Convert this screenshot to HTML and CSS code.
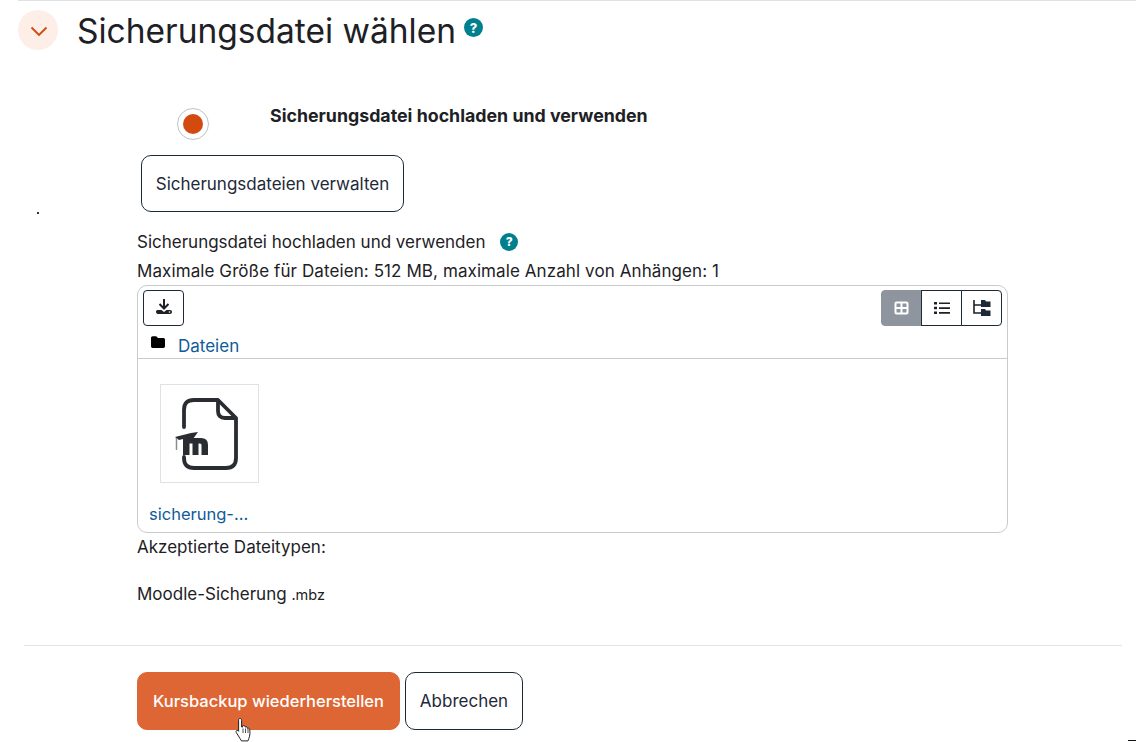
FILE: index.html
```html
<!DOCTYPE html>
<html lang="de">
<head>
<meta charset="utf-8">
<title>Sicherungsdatei wählen</title>
<link rel="stylesheet" href="styles.css">
</head>
<body>
<section class="section">
  <header class="head">
    <button class="toggle" type="button" aria-label="Einklappen">
      <svg width="18" height="11" viewBox="0 0 18 11"><path d="M1.500 1.500 9 9l7.500-7.500" fill="none" stroke="#d24a0e" stroke-width="1.900"/></svg>
    </button>
    <h2 class="title">Sicherungsdatei wählen</h2>
    <span class="help help-lg">?</span>
  </header>

  <div class="radio-row">
    <span class="radio"><span class="radio-dot"></span></span>
    <strong class="radio-label">Sicherungsdatei hochladen und verwenden</strong>
  </div>

  <div class="manage-row"><button class="btn btn-manage" type="button">Sicherungsdateien verwalten</button></div>
  <div class="speck"></div>

  <div class="form">
    <div class="line line-label">Sicherungsdatei hochladen und verwenden <span class="help help-sm">?</span></div>
    <div class="line line-max">Maximale Größe für Dateien: 512 MB, maximale Anzahl von Anhängen: 1</div>

    <div class="picker">
      <div class="toolbar">
        <button class="tool" type="button" aria-label="Herunterladen">
          <svg width="18" height="16" viewBox="0 0 18 16"><path d="M9 0v8" stroke="#1d2125" stroke-width="2" fill="none"/><path d="M4.500 5 9 9.500 13.500 5" stroke="#1d2125" stroke-width="2" fill="none"/><path d="M1 12.500C1 11.500 2 11 3 11h3.500L9 13l2.500-2H15c1.300 0 2 .8 2 2s-.8 2-2 2H3c-1.300 0-2-1-2-2.500z" fill="#1d2125"/><circle cx="14.500" cy="13" r=".8" fill="#fff"/></svg>
        </button>
        <div class="views">
          <button class="view view-on" type="button" aria-label="Kacheln">
            <svg width="15" height="14" viewBox="0 0 15 14"><rect x=".5" y=".5" width="14" height="13" rx="2" fill="#fff"/><path d="M2.500 2.500h4v3.500h-4zM8.500 2.500h4v3.500h-4zM2.500 8h4v3.500h-4zM8.500 8h4v3.500h-4z" fill="#8f959e"/></svg>
          </button>
          <button class="view" type="button" aria-label="Liste">
            <svg width="16" height="12" viewBox="0 0 16 12"><path d="M0 0h3v2.400H0zM0 4.800h3v2.400H0zM0 9.600h3V12H0zM5 .4h11v1.700H5zM5 5.200h11v1.700H5zM5 10h11v1.700H5z" fill="#1d2125"/></svg>
          </button>
          <button class="view" type="button" aria-label="Baum">
            <svg width="18" height="16" viewBox="0 0 18 16"><path d="M1 0v13h7M1 5h7" fill="none" stroke="#1d2125" stroke-width="1.600"/><path d="M8 0h4l1 1.500h4.500V7H8zM8 9h4l1 1.500h4.500V16H8z" fill="#1d2939"/></svg>
          </button>
        </div>
      </div>
      <div class="crumb">
        <svg width="14" height="12" viewBox="0 0 14 12"><path d="M0 2c0-1 .7-1.700 1.700-1.700h3.500L7 2h5.300C13.300 2 14 2.700 14 3.700v6.500c0 1-.7 1.700-1.700 1.700H1.700C.7 11.900 0 11.200 0 10.200z" fill="#000"/></svg>
        <a class="link crumb-link" href="#">Dateien</a>
      </div>
      <div class="files">
        <div class="file">
          <div class="thumb">
            <svg width="70" height="78" viewBox="0 0 70 78">
              <path d="M12 31V14Q12 4 22 4H46L64 22V62Q64 72 54 72H22Q12 72 12 62V61" fill="none" stroke="#292d32" stroke-width="3.800" stroke-linecap="round" stroke-linejoin="round"/>
              <path d="M46 4V15Q46 22 53 22H64" fill="none" stroke="#292d32" stroke-width="3.800"/>
              <path d="M11 42H29Q36 42 36 49V59H29.500V49Q29.500 47.500 28 47.500H26.500V59H20.500V47.500H17.500V59H11Z" fill="#292d32"/>
              <path d="M3 41 19 37 26 36 21 43H11L7 44Z" fill="#292d32"/>
              <path d="M4.500 42V54" stroke="#8a8d90" stroke-width="1.500"/>
            </svg>
          </div>
          <a class="link file-name" href="#">sicherung-...</a>
        </div>
      </div>
    </div>

    <div class="line line-types">Akzeptierte Dateitypen:</div>
    <div class="line line-mbz">Moodle-Sicherung <span class="ext">.mbz</span></div>
  </div>

  <hr class="rule">

  <div class="actions">
    <button class="btn btn-primary" type="button">Kursbackup wiederherstellen</button>
    <button class="btn btn-cancel" type="button">Abbrechen</button>
    <svg class="cursor" width="18" height="25" viewBox="0 0 18 25"><path d="M5 1.500c1 0 1.600.7 1.600 1.700V10l1 .1V8.900c1-.6 2-.4 2.400.4l.1.8c1-.6 2-.3 2.300.6v.7c1-.4 2-.1 2.300 1 .5 3 .3 6-.8 9l-1 2.500H6.500L5 21.500 1.200 15.400c-.5-1 0-1.900 1-2 .6 0 1.100.4 1.400.9V3.200C3.500 2.200 4 1.500 5 1.500z" fill="#fff" stroke="#222" stroke-width="1"/><path d="M8 11.500V16M10.500 11.500V16M13 12V16" stroke="#222" stroke-width=".8" fill="none"/></svg>
  </div>
  <div class="corner-mark"></div>
</section>
</body>
</html>
```
FILE: styles.css
```css
* { box-sizing: border-box; }
html, body { margin: 0; padding: 0; background: #fff; }
body {
  width: 1136px;
  height: 742px;
  overflow: hidden;
  font-family: Inter, "Liberation Sans", sans-serif;
  font-size: 17px;
  color: #1d2125;
}
.section {
  position: relative;
  height: 742px;
  margin-left: 18px;
  border-top: 1px solid #dee2e6;
}
.head {
  display: flex;
  align-items: center;
  height: 40px;
  margin-top: 9px;
}
.toggle {
  width: 40px;
  height: 40px;
  flex: none;
  display: flex;
  align-items: center;
  justify-content: center;
  padding: 2px 0 0 2px;
  border: 0;
  border-radius: 50%;
  background: #fdeee8;
}
.title {
  margin: 1px 0 0 19px;
  font-family: Inter, sans-serif;
  font-size: 33.500px;
  line-height: 40px;
  font-weight: 400;
  color: #1d2125;
}
.help {
  display: inline-flex;
  align-items: center;
  justify-content: center;
  border-radius: 50%;
  background: #00808f;
  color: #fff;
  font-weight: 800;
}
.help-lg { width: 19px; height: 19px; font-size: 13px; margin: -5px 0 0 8px; }
.help-sm { width: 18px; height: 18px; font-size: 12px; margin-left: 10px; }
.radio-row {
  display: flex;
  height: 55px;
  margin: 58px 0 0 159px;
}
.radio {
  width: 32px;
  height: 32px;
  display: flex;
  align-items: center;
  justify-content: center;
  border: 1px solid #bfc3c7;
  border-radius: 50%;
}
.radio-dot { width: 20px; height: 20px; border-radius: 50%; background: #d24a0e; }
.radio-label {
  margin: -3px 0 0 61px;
  font-size: 17.800px;
  line-height: 22px;
  font-weight: 700;
}
.manage-row { margin: -8px 0 0 123px; }
.btn {
  font-family: inherit;
  font-size: 17px;
  color: #1d2939;
  background: #fff;
  border: 1px solid #1d2939;
  border-radius: 10px;
}
.btn-manage { width: 263px; height: 57px; padding: 0; }
.speck { width: 2px; height: 2px; margin: 0 0 0 19px; background: #333; }
.form { margin: 17px 0 0 119px; }
.line { line-height: 22px; }
.line-label { display: flex; align-items: center; height: 22px; white-space: pre; }
.line-max { margin-top: 7px; height: 22px; letter-spacing: .09px; }
.picker {
  width: 871px;
  height: 248px;
  margin-top: 3px;
  border: 1px solid #c8cacc;
  border-radius: 10px;
}
.toolbar {
  display: flex;
  justify-content: space-between;
  padding: 4px 5px 0 5px;
}
.tool {
  width: 41px;
  height: 36px;
  padding: 0;
  background: #fff;
  border: 1px solid #1d2939;
  border-radius: 4px;
}
.views { display: flex; }
.view {
  width: 41px;
  height: 36px;
  margin-left: -1px;
  padding: 0;
  display: flex;
  align-items: center;
  justify-content: center;
  background: #fff;
  border: 1px solid #1d2939;
}
.view:last-child { border-radius: 0 4px 4px 0; }
.view-on {
  background: #8f959e;
  border-color: #8f959e;
  border-radius: 4px 0 0 4px;
}
.crumb {
  display: flex;
  align-items: center;
  height: 33px;
  padding: 0 0 0 13px;
  border-bottom: 1px solid #c8cacc;
}
.link { color: #0f5b99; text-decoration: none; }
.crumb-link { margin: 8px 0 0 13px; }
.files { padding: 25px 0 0 11px; }
.file { width: 100px; }
.thumb {
  width: 99px;
  height: 99px;
  margin-left: 11px;
  padding: 11px 0 0 11px;
  border: 1px solid #dee2e6;
}
.thumb svg { display: block; }
.file-name { display: block; margin-top: 21px; font-size: 16.500px; white-space: nowrap; }
.line-types { margin-top: 3px; }
.line-mbz { margin-top: 25px; }
.ext { font-size: 14.500px; }
.rule {
  width: 1098px;
  margin: 39px 0 0 6px;
  border: 0;
  border-top: 1px solid #e2e4e6;
}
.actions {
  position: relative;
  display: flex;
  gap: 5px;
  margin: 26px 0 0 119px;
}
.btn-primary {
  width: 263px;
  height: 58px;
  padding: 0;
  color: #fff;
  font-size: 16.500px;
  font-weight: 500;
  background: #de6635;
  border-color: #de6635;
}
.btn-cancel { width: 118px; height: 58px; padding: 0; }
.cursor { position: absolute; left: 98px; top: 45px; }
.corner-mark {
  position: absolute;
  left: 1110px;
  top: 739px;
  width: 8px;
  height: 1px;
  background: #111;
}
```
